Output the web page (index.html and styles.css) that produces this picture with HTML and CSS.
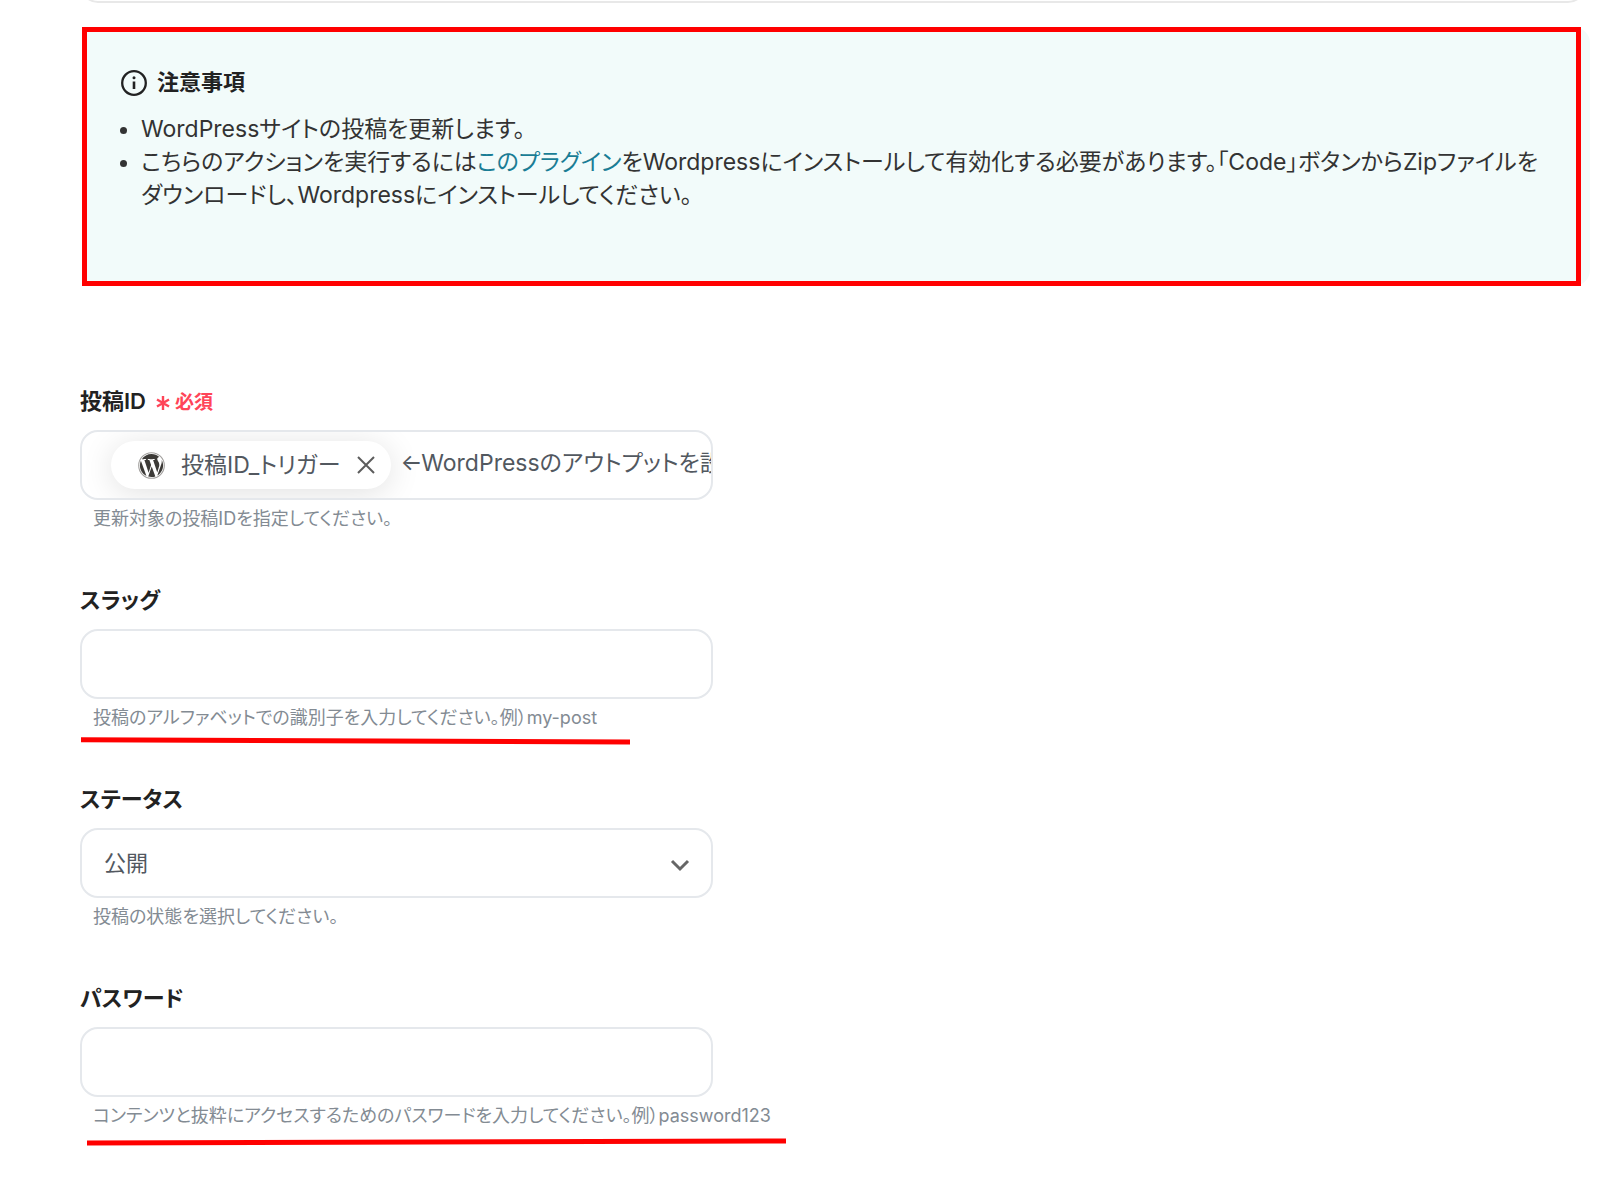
FILE: index.html
```html
<!DOCTYPE html>
<html lang="ja">
<head>
<meta charset="utf-8">
<meta name="viewport" content="width=device-width, initial-scale=1">
<title>投稿を更新</title>
<link rel="stylesheet" href="styles.css">
</head>
<body>
<main class="page">
  <div class="panel-clip"><div class="panel"></div></div>

  <section class="note">
    <h2 class="note-title">
      <svg class="note-icon" viewBox="0 0 26 26" aria-hidden="true">
        <circle cx="13" cy="13" r="11.8" fill="none" stroke="currentColor" stroke-width="2.3"/>
        <circle cx="13" cy="7.8" r="1.5" fill="currentColor"/>
        <path d="M13 11.5v7.5" stroke="currentColor" stroke-width="2.6"/>
      </svg>
      注意事項
    </h2>
    <ul class="note-list">
      <li>WordPressサイトの投稿を更新します。</li>
      <li>こちらのアクションを実行するには<a href="#">このプラグイン</a>をWordpressにインストールして有効化する必要があります。「Code」ボタンからZipファイルをダウンロードし、Wordpressにインストールしてください。</li>
    </ul>
  </section>

  <form class="fields">
    <div class="field">
      <label class="label" for="post-id">投稿ID
        <span class="required"><svg class="star" viewBox="0 0 14 16" aria-hidden="true"><path d="M7 1v14M1 4.5l12 7M13 4.5l-12 7" stroke="currentColor" stroke-width="2.4"/></svg>必須</span>
      </label>
      <div class="control token-box">
        <span class="chip">
          <svg class="wp" viewBox="0 0 122.5 122.5" aria-hidden="true">
            <path d="M8.7 61.3c0 20.8 12.1 38.7 29.6 47.3L13.2 39.9c-2.900 6.500-4.500 13.700-4.500 21.400zM96.700 58.600c0-6.500-2.300-11-4.300-14.500-2.700-4.300-5.200-8-5.200-12.300 0-4.800 3.700-9.300 8.900-9.300h.7C87.400 13.800 74.900 8.700 61.300 8.700 42.900 8.700 26.700 18.100 17.300 32.400c1.200 0 2.400.1 3.400.1 5.500 0 14-.7 14-.7 2.800-.2 3.200 4 .3 4.300 0 0-2.900.3-6 .5l19.100 57 11.500-34.500-8.200-22.500c-2.800-.2-5.500-.5-5.500-.5-2.800-.2-2.500-4.500.3-4.300 0 0 8.700.7 13.900.7 5.500 0 14-.7 14-.7 2.800-.2 3.200 4 .3 4.300 0 0-2.900.3-6 .5l19 56.500 5.200-17.500c2.300-7.300 4.100-12.500 4.100-17zM62.200 65.900l-15.800 45.800c4.700 1.400 9.700 2.200 14.900 2.200 6.100 0 12-1.100 17.500-3l-.4-.7zM107.400 36.100c.2 1.700.4 3.500.4 5.400 0 5.300-1 11.300-4 18.800l-16.100 46.400c15.600-9.100 26.200-26 26.200-45.400 0-9.100-2.300-17.700-6.500-25.200z" fill="currentColor"/>
            <path d="M61.300 3.200a58.100 58.100 0 1 0 0 116.200 58.100 58.100 0 0 0 0-116.200z" fill="none" stroke="#a3a19f" stroke-width="5"/>
          </svg>
          <span>投稿ID_トリガー</span>
          <button class="chip-remove" type="button" aria-label="削除">
            <svg viewBox="0 0 18 18" aria-hidden="true"><path d="M1 1l16 16M17 1L1 17" stroke="currentColor" stroke-width="2"/></svg>
          </button>
        </span>
        <input class="token-input" id="post-id" type="text" value="←WordPressのアウトプットを設定">
      </div>
      <p class="help">更新対象の投稿IDを指定してください。</p>
    </div>

    <div class="field">
      <label class="label" for="slug">スラッグ</label>
      <input class="control" id="slug" type="text">
      <p class="help">投稿のアルファベットでの識別子を入力してください。例）my-post</p>
      <svg class="mark mark-slug" viewBox="0 0 549 8" aria-hidden="true"><path d="M0 2.700L549 5" stroke="currentColor" stroke-width="5"/></svg>
    </div>

    <div class="field">
      <label class="label" for="status">ステータス</label>
      <div class="select-box">
        <select class="control select" id="status"><option>公開</option></select>
        <svg class="chevron" viewBox="0 0 20 14" aria-hidden="true"><path d="M2 3l8 8 8-8" fill="none" stroke="currentColor" stroke-width="3"/></svg>
      </div>
      <p class="help">投稿の状態を選択してください。</p>
    </div>

    <div class="field">
      <label class="label" for="password">パスワード</label>
      <input class="control" id="password" type="text">
      <p class="help">コンテンツと抜粋にアクセスするためのパスワードを入力してください。例）password123</p>
      <svg class="mark mark-password" viewBox="0 0 699 8" aria-hidden="true"><path d="M0 5L699 3" stroke="currentColor" stroke-width="5"/></svg>
    </div>
  </form>
</main>
</body>
</html>
```
FILE: styles.css
```css
* {
  box-sizing: border-box;
}

body {
  margin: 0;
  background: #fff;
  color: #333;
  font-family: Inter, "Noto Sans CJK JP", sans-serif;
  font-size: 23px;
  line-height: 33px;
  font-feature-settings: "palt";
}

.page {
  padding: 0 10px 40px 80px;
}

/* Lower edge of the panel above the notice */
.panel-clip {
  display: flex;
  align-items: flex-end;
  height: 3px;
  margin-right: 4px;
  overflow: hidden;
}

.panel {
  flex: 1;
  height: 48px;
  border: 2px solid #e8e8e8;
  border-radius: 18px;
}

/* Notice */
.note {
  position: relative;
  margin: 24px 0 0 2px;
  padding: 39px 40px 74px 39px;
  border-radius: 16px;
  background: #f2fbfa;
}

.note::after {
  content: "";
  position: absolute;
  inset: 0 9px 0 0;
  border: 5px solid #f00;
  pointer-events: none;
}

.note-title {
  display: flex;
  align-items: center;
  gap: 10px;
  margin: 0 0 14px;
  color: #222;
  font-size: 22px;
  font-weight: 600;
}

.note-icon {
  width: 26px;
  height: 26px;
}

.note-list {
  margin: 0;
  padding-left: 20px;
}

.note-list a {
  color: #1a7d95;
  text-decoration: none;
}

/* Form */
.fields {
  display: flex;
  flex-direction: column;
  gap: 51px;
  max-width: 633px;
  margin-top: 99px;
}

.field {
  position: relative;
}

.label {
  display: flex;
  align-items: center;
  gap: 10px;
  margin-bottom: 12px;
  color: #222;
  font-size: 22px;
  font-weight: 600;
}

.required {
  display: flex;
  align-items: center;
  gap: 5px;
  padding-top: 2px;
  color: #ff4558;
  font-size: 19px;
  line-height: 31px;
}

.star {
  width: 14px;
  height: 16px;
}

.control {
  display: block;
  width: 100%;
  height: 70px;
  padding: 0 22px;
  border: 2px solid #e5e8ec;
  border-radius: 18px;
  background: #fff;
  color: #52585f;
  font: inherit;
  font-size: 22px;
  font-feature-settings: inherit;
}

.token-box {
  display: flex;
  align-items: center;
  gap: 10px;
  padding: 0 0 0 29px;
  overflow: hidden;
  font-size: 23px;
}

.chip {
  display: flex;
  flex: none;
  align-items: center;
  height: 48px;
  padding: 0 16px 0 27px;
  border-radius: 24px;
  background: #fff;
  box-shadow: 0 4px 32px rgba(0, 0, 0, 0.12);
}

.wp {
  width: 27px;
  height: 27px;
  margin-right: 16px;
  color: #3c3a37;
}

.chip-remove {
  width: 18px;
  height: 18px;
  margin-left: 16px;
  padding: 0;
  border: 0;
  background: none;
  color: #5c5c5c;
}

.chip-remove svg {
  display: block;
}

.token-input {
  flex: 1;
  min-width: 0;
  padding: 0 0 4px;
  border: 0;
  background: none;
  color: inherit;
  font: inherit;
  font-feature-settings: inherit;
}

.select-box {
  position: relative;
}

.select {
  appearance: none;
}

.chevron {
  position: absolute;
  top: 30px;
  right: 23px;
  width: 20px;
  height: 14px;
  color: #666;
  pointer-events: none;
}

.help {
  margin: 5px 0 0;
  padding-left: 13px;
  color: #838b93;
  font-size: 18px;
  line-height: 28px;
  white-space: nowrap;
}

.mark {
  position: absolute;
  height: 8px;
  color: #f00;
}

.mark-slug {
  top: 153px;
  left: 1px;
  width: 549px;
}

.mark-password {
  top: 156px;
  left: 7px;
  width: 699px;
}
```
